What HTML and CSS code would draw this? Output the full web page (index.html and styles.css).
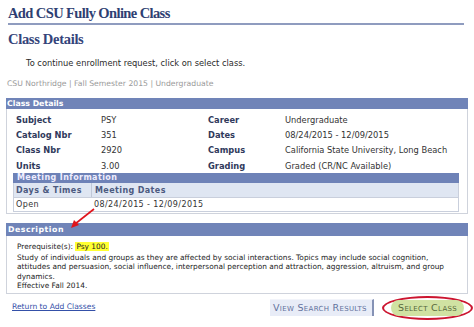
FILE: index.html
```html
<!DOCTYPE html>
<html>
<head>
<meta charset="utf-8">
<link rel="stylesheet" href="styles.css">
</head>
<body>
<div class="page">
  <h1 class="title">Add CSU Fully Online Class</h1>
  <h2 class="subtitle">Class Details</h2>
  <p class="instr">To continue enrollment request, click on select class.</p>
  <p class="crumb">CSU Northridge | Fall Semester 2015 | Undergraduate</p>

  <section class="box details">
    <div class="bar">Class Details</div>
    <div class="grid">
      <span class="lbl">Subject</span><span class="val">PSY</span>
      <span class="lbl">Career</span><span class="val">Undergraduate</span>
      <span class="lbl">Catalog Nbr</span><span class="val">351</span>
      <span class="lbl">Dates</span><span class="val">08/24/2015 - 12/09/2015</span>
      <span class="lbl">Class Nbr</span><span class="val">2920</span>
      <span class="lbl">Campus</span><span class="val">California State University, Long Beach</span>
      <span class="lbl">Units</span><span class="val">3.00</span>
      <span class="lbl">Grading</span><span class="val">Graded (CR/NC Available)</span>
    </div>
    <div class="meet">
      <div class="mbar">Meeting Information</div>
      <div class="mhead"><span class="c1">Days &amp; Times</span><span class="c2">Meeting Dates</span></div>
      <div class="mrow"><span class="c1">Open</span><span class="c2">08/24/2015 - 12/09/2015</span></div>
    </div>
  </section>

  <section class="box desc">
    <div class="bar dbar">Description</div>
    <div class="dtext">
      <div class="prereq">Prerequisite(s): <mark>Psy 100.</mark></div>
      <div>Study of individuals and groups as they are affected by social interactions. Topics may include social cognition, attitudes and persuasion, social influence, interpersonal perception and attraction, aggression, altruism, and group dynamics.</div>
      <div>Effective Fall 2014.</div>
    </div>
  </section>

  <div class="actions">
    <a class="back" href="#">Return to Add Classes</a>
    <div class="btns">
      <span class="btn view">View Search Results</span>
      <span class="ring"><span class="btn select">Select Class</span></span>
    </div>
  </div>

  <svg class="arrow" width="30" height="24" viewBox="0 0 30 24">
    <line x1="26" y1="2" x2="7" y2="17" stroke="#e0141c" stroke-width="1.6"/>
    <path d="M3 21 L6 13 L11 18 Z" fill="#e0141c"/>
  </svg>
</div>
</body>
</html>
```
FILE: styles.css
```css
html, body { margin: 0; padding: 0; background: #fff; }
body { font-family: "DejaVu Sans", Verdana, sans-serif; font-size: 8.3px; color: #222; }
.page { position: relative; padding: 4px 6px 0 6px; width: 462px; }

.title {
  margin: 0 4px 0 2px;
  font-family: "Liberation Serif", "Times New Roman", serif;
  font-weight: bold;
  font-size: 14.5px;
  letter-spacing: -0.6px;
  line-height: 18px;
  color: #2f3f73;
  border-bottom: 2px solid #8f9cbf;
  padding-bottom: 1px;
}
.subtitle {
  margin: 6px 0 0 2px;
  font-family: "Liberation Serif", "Times New Roman", serif;
  font-weight: bold;
  font-size: 14.5px;
  letter-spacing: -0.3px;
  line-height: 16px;
  color: #34447a;
}
.instr { margin: 11px 0 0 20px; font-size: 8.3px; line-height: 10px; color: #2a2a2a; }
.crumb { margin: 11px 0 0 1px; font-size: 7.7px; line-height: 10px; color: #9a9a9a; }

.box { border: 1px solid #cfd3dc; border-top: none; }
.details { margin-top: 9px; padding-bottom: 1px; }
.bar {
  background: #7084b8;
  color: #fff;
  font-weight: bold;
  font-size: 7.8px;
  line-height: 11px;
  padding-left: 1px;
  margin: 0 -1px;
}
.grid {
  display: grid;
  grid-template-columns: 85px 107px 77px 1fr;
  grid-auto-rows: 15.3px;
  align-items: center;
  padding: 3px 0 0 9px;
}
.lbl { font-weight: bold; color: #303a5c; }
.val { color: #333; }

.meet { margin: 0 8px 0 6px; border: 1px solid #c9cfdc; border-top: none; font-size: 8px; }
.mbar {
  background: #6e82b7; color: #eef; font-weight: bold; letter-spacing: 0.4px;
  line-height: 10px; padding-left: 4px; margin: 0 -1px;
}
.mhead, .mrow { display: flex; }
.mhead { background: #dfe6f2; color: #4c5a80; font-weight: bold; letter-spacing: 0.4px; height: 14px; align-items: center; border-bottom: 1px solid #c9cfdc; }
.mrow { height: 13px; align-items: center; color: #333; letter-spacing: 0.4px; }
.c1 { width: 75px; padding-left: 2px; align-self: stretch; display: flex; align-items: center; }
.mhead .c1 { border-right: 1px solid #c0c8d8; }
.c2 { padding-left: 3px; }

.desc { margin-top: 9px; }
.dbar { line-height: 13px; letter-spacing: 0.5px; padding-left: 2px; }
.dtext { padding: 6px 8px 2px 10px; font-size: 7.4px; line-height: 9.5px; color: #222; }
.prereq { margin-bottom: 1px; }
mark { background: #ffff33; color: #222; padding: 0 1px; }

.actions { display: flex; justify-content: space-between; align-items: center; margin-top: 2px; padding-left: 6px; }
.back { color: #3450a8; text-decoration: underline; font-size: 7.6px; margin-bottom: 3px; }
.btns { display: flex; align-items: center; gap: 8px; margin-right: -5px; }
.btn {
  font-variant: small-caps; text-transform: capitalize; font-weight: normal;
  font-size: 9.5px; letter-spacing: 0.3px; display: block; line-height: 16px; white-space: nowrap;
}
.view { background: #e8ecf7; color: #62719c; padding: 0 2px 0 3px; width: 97px; border-right: 2px solid #8592b5; border-top: 1px solid #f2f4fa; }
.ring { border: 2px solid #cc1530; border-radius: 50%; padding: 2px 7px; }
.select { background: #d0e2a2; color: #56683a; padding: 0 7px; border-radius: 8px; }

.arrow { position: absolute; left: 68px; top: 207px; }
```
